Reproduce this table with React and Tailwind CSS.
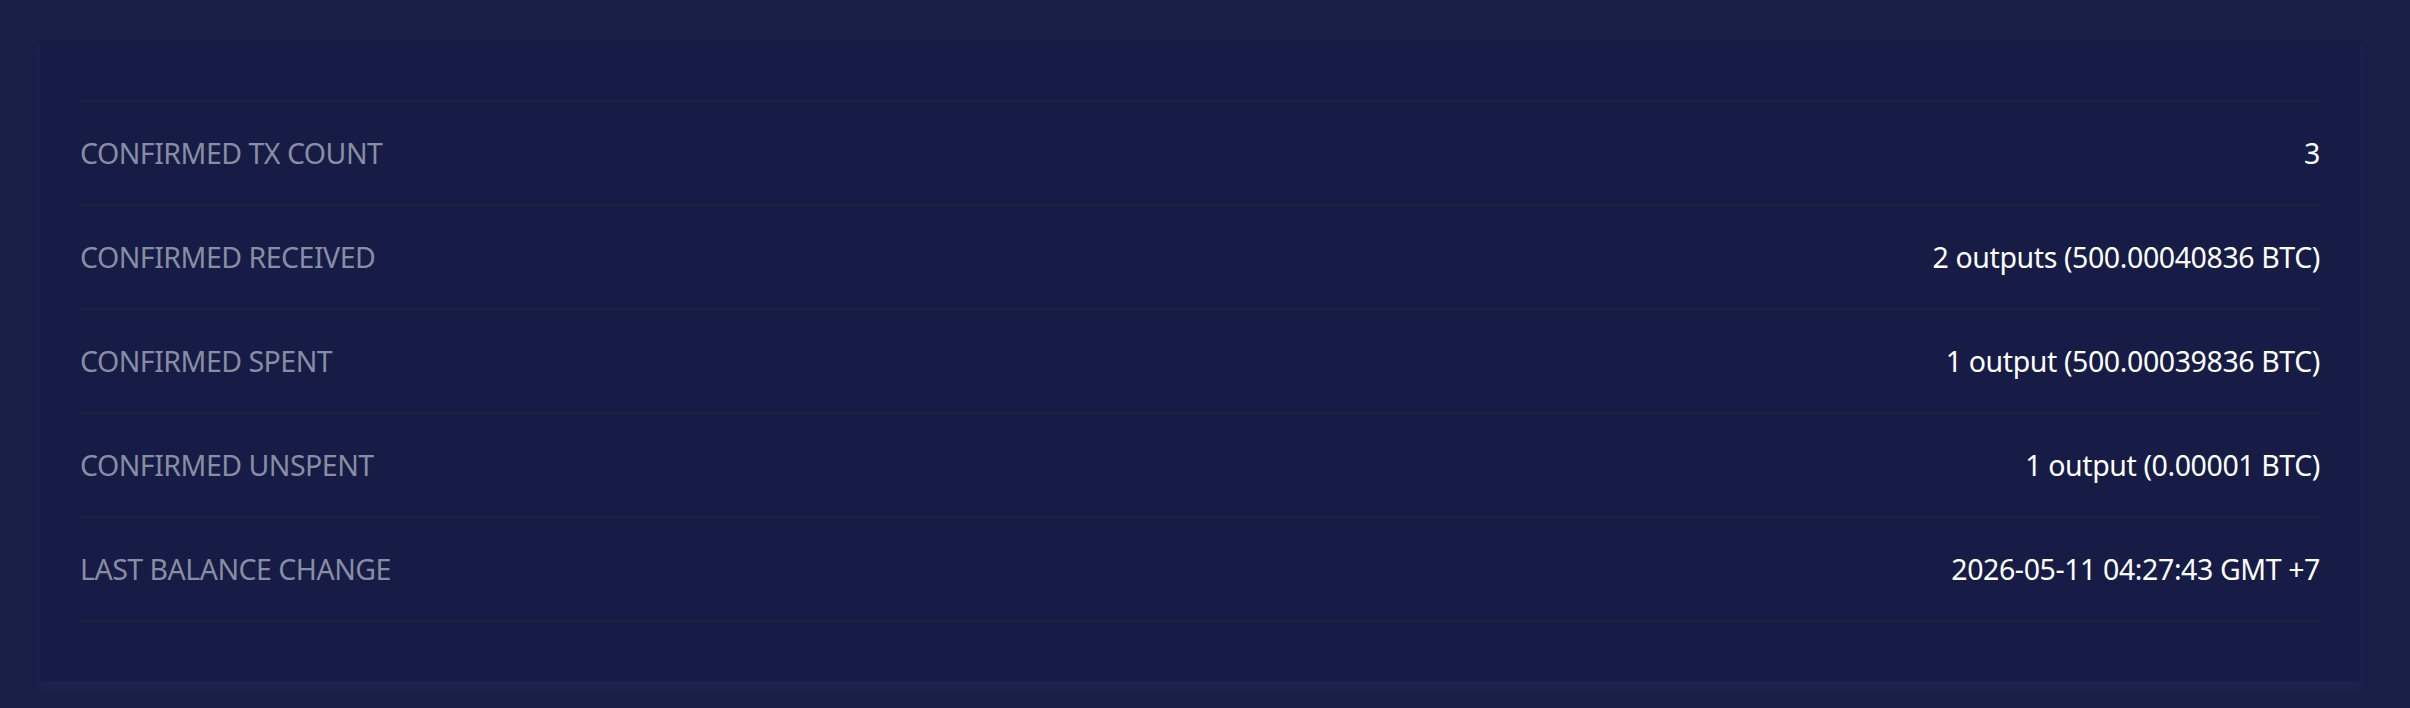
import React from 'react';

const rows = [
  { label: 'CONFIRMED TX COUNT', value: '3' },
  { label: 'CONFIRMED RECEIVED', value: '2 outputs (500.00040836 BTC)' },
  { label: 'CONFIRMED SPENT', value: '1 output (500.00039836 BTC)' },
  { label: 'CONFIRMED UNSPENT', value: '1 output (0.00001 BTC)' },
  { label: 'LAST BALANCE CHANGE', value: '2026-05-11 04:27:43 GMT +7' },
];

export default function App() {
  return (
    <main className="min-h-screen bg-[#191f47] py-10 pl-10 pr-[50px] font-['Noto_Sans',sans-serif]">
      <div className="rounded-sm bg-[#161c45] px-10 pt-[60px] pb-[60px] shadow-[0_6px_10px_rgba(40,50,110,0.35)]">
        <div className="border-t-2 border-[#1d2440]">
          {rows.map((r) => (
            <div key={r.label} className="flex h-[104px] items-center justify-between border-b-2 border-[#1d2440]">
              <span className="text-[28.5px] tracking-[-0.5px] text-[#878ea4]">{r.label}</span>
              <span className="text-[28.5px] tracking-[-0.4px] text-white">{r.value}</span>
            </div>
          ))}
        </div>
      </div>
    </main>
  );
}
